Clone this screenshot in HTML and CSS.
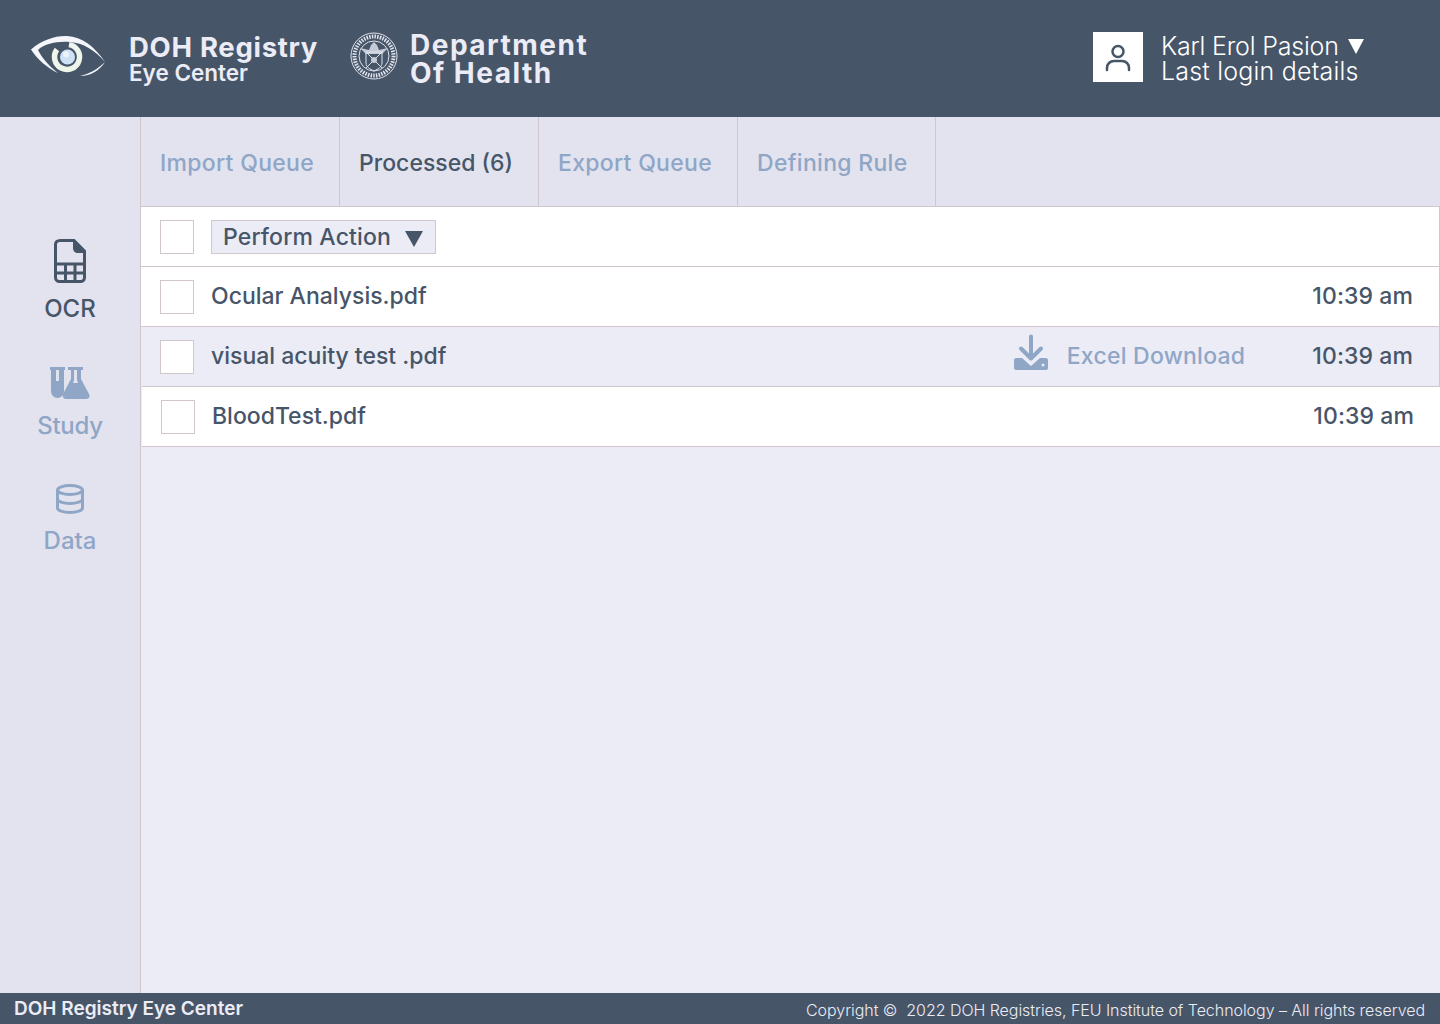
FILE: index.html
```html
<!DOCTYPE html>
<html lang="en">

<head>
    <meta charset="UTF-8">
    <meta name="viewport" content="width=device-width, initial-scale=1.0">
    <title>DOH Registry Eye Center</title>
    <link rel="stylesheet" href="styles.css">
</head>

<body>
    <header class="topbar">
        <div class="brand">
            <svg class="eye-logo" viewBox="0 0 76 42" width="76" height="42">
                <path class="eye-lid" d="M1 14.500C12 5 25 .5 37 1c15 .5 28 11 38 26C65 15 53 8 40 7 26 6 14 9 8 15c4 8 12 17 20 23C17 33 7 24 1 14.500z" />
                <path class="eye-lid" d="M50 41c9-2 18-7 25-14-5 8-14 14-25 14z" />
                <path class="eye-ring" d="M39 9.600A12.500 12.500 0 1 1 27 14.500" />
                <circle class="eye-pupil" cx="37.500" cy="22" r="7.500" />
                <circle class="eye-dot" cx="36" cy="19.500" r="3" />
            </svg>
            <div class="brand-text">
                <div class="brand-name">DOH Registry</div>
                <div class="brand-sub">Eye Center</div>
            </div>
            <svg class="seal" viewBox="0 0 48 48" width="48" height="48">
                <circle class="seal-line" cx="24" cy="24" r="23" />
                <circle class="seal-dash" cx="24" cy="24" r="19.500" />
                <circle class="seal-line" cx="24" cy="24" r="15" />
                <path class="seal-fill" d="M10 16l9 2 2-5 3-3 3 3 2 5 9-2-6 6H16z" />
                <path class="seal-line" d="M16 20h16v11c0 4-4 6-8 8-4-2-8-4-8-8z" />
                <path class="seal-line" d="M16 20l16 16M32 20L16 36" />
                <circle class="seal-fill" cx="24" cy="28" r="3" />
            </svg>
            <div class="dept-name">Department<br>Of Health</div>
        </div>
        <div class="user">
            <div class="avatar">
                <svg viewBox="0 0 50 50" width="50" height="50">
                    <circle class="avatar-line" cx="25" cy="19.500" r="5.500" />
                    <path class="avatar-line" d="M14 38v-2c0-4 3-7 7-7h8c4 0 7 3 7 7v2" />
                </svg>
            </div>
            <div class="user-text">
                <div class="user-name">Karl Erol Pasion <span class="caret caret-light"></span></div>
                <div class="user-login">Last login details</div>
            </div>
        </div>
    </header>

    <div class="layout">
        <nav class="sidebar">
            <a class="nav-item active">
                <svg viewBox="0 0 32 44" width="32" height="44">
                    <path class="nav-line" d="M5 1.500h15L30.500 12v26.500a4 4 0 0 1-4 4H5.500a4 4 0 0 1-4-4V5.500a4 4 0 0 1 4-4z" />
                    <path class="nav-solid" d="M19 1l12 11.500v1.500h-7c-3 0-5-2-5-5z" />
                    <path class="nav-line" d="M1.500 25h29M1.500 34h29M11.500 25v17.500M21 25v17.500" />
                </svg>
                <span>OCR</span>
            </a>
            <a class="nav-item nav-study">
                <svg viewBox="0 0 40 34" width="40" height="34">
                    <path class="study-fill" d="M0 1h15v3h-1v21c0 4-3 7-6.500 7S1 29 1 25V4H0zM6 4v11h3V4z" />
                    <path class="study-fill" fill-rule="evenodd" d="M18 1h15v3h-2v9l8 15c1.500 3-.500 5-3 5H16c-2.500 0-4-2-3-5l8-15V4h-3zM24 4v10l-1 3h5l-1-3V4z" />
                </svg>
                <span>Study</span>
            </a>
            <a class="nav-item nav-data">
                <svg viewBox="0 0 28 30" width="28" height="30">
                    <ellipse class="data-line" cx="14" cy="6" rx="12.500" ry="4.500" />
                    <path class="data-line" d="M1.500 6v18c0 2.500 5.500 4.500 12.500 4.500s12.500-2 12.500-4.500V6M1.500 15c0 2.500 5.500 4.500 12.500 4.500s12.500-2 12.500-4.500" />
                </svg>
                <span>Data</span>
            </a>
        </nav>

        <main class="content">
            <div class="tabs">
                <div class="tab">Import Queue</div>
                <div class="tab active">Processed (6)</div>
                <div class="tab">Export Queue</div>
                <div class="tab tab-last">Defining Rule</div>
            </div>

            <div class="row">
                <span class="check"></span>
                <div class="action-select">Perform Action <span class="caret caret-dark"></span></div>
            </div>
            <div class="row">
                <span class="check"></span>
                <span class="file">Ocular Analysis.pdf</span>
                <span class="time">10:39 am</span>
            </div>
            <div class="row row-hover">
                <span class="check"></span>
                <span class="file">visual acuity test .pdf</span>
                <span class="download">
                    <svg viewBox="0 0 34 36" width="34" height="36">
                        <path class="dl-line" d="M17 2.500V24M7 14.500L17 24.500 27 14.500" />
                        <path class="dl-fill" fill-rule="evenodd" d="M2 24h6l9 8 9-8h6c1 0 2 1 2 2v8c0 1-1 2-2 2H2c-1 0-2-1-2-2v-8c0-1 1-2 2-2zm27 5.500a1.500 1.500 0 1 0 0 3 1.500 1.500 0 0 0 0-3z" />
                    </svg>
                    Excel Download
                </span>
                <span class="time">10:39 am</span>
            </div>
            <div class="row row-shift">
                <span class="check"></span>
                <span class="file">BloodTest.pdf</span>
                <span class="time">10:39 am</span>
            </div>
        </main>
    </div>

    <footer class="footer">
        <div class="footer-name">DOH Registry Eye Center</div>
        <div class="footer-copy">Copyright &copy; &nbsp;2022 DOH Registries, FEU Institute of Technology &ndash; All rights reserved</div>
    </footer>
</body>

</html>
```

FILE: styles.css
```css
/* Page */

html,
body {
    height: 100%;
}

body {
    margin: 0;
    display: flex;
    flex-direction: column;
    height: 1024px;
    overflow: hidden;
    font-family: "Inter", "Liberation Sans", sans-serif;
    color: #475569;
    background: #ebecf5;
}

/* Top bar */

.topbar {
    flex: 0 0 117px;
    display: flex;
    align-items: center;
    justify-content: space-between;
    background: #475569;
    color: #ebecf5;
}

.brand {
    display: flex;
    align-items: center;
    padding-left: 30px;
}

.eye-logo {
    margin: 0 23px 5px 0;
}

.eye-lid {
    fill: #f4f6fb;
}

.eye-ring {
    fill: none;
    stroke: #eef5ea;
    stroke-width: 5.500;
}

.eye-pupil {
    fill: #cfe2f5;
}

.eye-dot {
    fill: #ffffff;
    opacity: 0.6;
}

.brand-text {
    width: 221px;
}

.brand-name {
    font-size: 27.500px;
    line-height: 30px;
    font-weight: 700;
    letter-spacing: 0.700px;
    margin-top: 1px;
}

.brand-sub {
    font-size: 22.500px;
    line-height: 26px;
    font-weight: 600;
    margin-top: -2px;
}

.seal {
    margin: 0 12px 5px 0;
}

.seal-line {
    fill: none;
    stroke: #dfe3ec;
    stroke-width: 1;
}

.seal-dash {
    fill: none;
    stroke: #dfe3ec;
    stroke-width: 4;
    stroke-dasharray: 1.500 1.200;
}

.seal-fill {
    fill: #c4cad6;
}

.dept-name {
    font-size: 28px;
    line-height: 28px;
    font-weight: 700;
    letter-spacing: 1.500px;
}

.user {
    display: flex;
    align-items: center;
    width: 347px;
}

.avatar {
    width: 50px;
    height: 50px;
    background: #ffffff;
    margin: 0 18px 4px 0;
}

.avatar-line {
    fill: none;
    stroke: #475569;
    stroke-width: 2.500;
    stroke-linecap: round;
}

.user-text {
    font-size: 25px;
    line-height: 26px;
    font-weight: 300;
    color: #ffffff;
}

.user-name {
    display: flex;
    align-items: center;
    gap: 9px;
    letter-spacing: -0.200px;
}

.user-login {
    letter-spacing: 0.200px;
    margin-top: -1px;
}

.caret {
    display: inline-block;
    width: 0;
    height: 0;
}

.caret-light {
    border-left: 8px solid transparent;
    border-right: 8px solid transparent;
    border-top: 15px solid #ffffff;
}

.caret-dark {
    border-left: 9.500px solid transparent;
    border-right: 9.500px solid transparent;
    border-top: 16px solid #475569;
    margin-top: 4px;
}

/* Layout */

.layout {
    flex: 1;
    display: flex;
    min-height: 0;
}

/* Sidebar */

.sidebar {
    flex: 0 0 141px;
    display: flex;
    flex-direction: column;
    align-items: center;
    gap: 43px;
    padding-top: 122px;
    box-sizing: border-box;
    background: #e2e3ee;
    border-right: 1px solid #d0c6cb;
}

.nav-item {
    display: flex;
    flex-direction: column;
    align-items: center;
    gap: 12px;
    font-size: 24px;
    line-height: 28px;
    font-weight: 500;
    color: #8fa6c7;
}

.nav-item.active {
    color: #475569;
}

.nav-study {
    letter-spacing: -0.300px;
}

.nav-data {
    gap: 13px;
    margin-top: 1px;
}

.nav-line {
    fill: none;
    stroke: #475569;
    stroke-width: 3;
}

.nav-solid {
    fill: #475569;
}

.study-fill {
    fill: #8fa6c7;
}

.data-line {
    fill: none;
    stroke: #8fa6c7;
    stroke-width: 3;
}

/* Tabs */

.content {
    flex: 1;
    min-width: 0;
    overflow: hidden;
}

.tabs {
    display: flex;
    height: 89px;
    background: #e2e3ee;
}

.tab {
    width: 199px;
    box-sizing: border-box;
    padding: 3px 0 0 19px;
    display: flex;
    align-items: center;
    font-size: 23px;
    font-weight: 500;
    letter-spacing: 0.300px;
    color: #8fa6c7;
    border-right: 1px solid #d0c6cb;
}

.tab.active {
    color: #475569;
    letter-spacing: 0;
}

.tab-last {
    width: 198px;
}

/* File rows */

.row {
    display: flex;
    align-items: center;
    height: 60px;
    box-sizing: border-box;
    padding: 0 26px 0 19px;
    font-size: 23px;
    font-weight: 500;
    background: #ffffff;
    border-top: 1px solid #d0c6cb;
    border-right: 1px solid #d0c6cb;
}

.row-hover {
    background: #ebecf5;
}

.row-shift {
    margin: 0 -1px 0 1px;
    border-bottom: 1px solid #d0c6cb;
    height: 61px;
}

.check {
    width: 34px;
    height: 34px;
    box-sizing: border-box;
    background: #ffffff;
    border: 1px solid #d0c6cb;
    margin-right: 17px;
}

.action-select {
    width: 225px;
    height: 34px;
    box-sizing: border-box;
    padding: 0 12px 0 11px;
    display: flex;
    align-items: center;
    justify-content: space-between;
    letter-spacing: 0.150px;
    background: #ebecf5;
    border: 1px solid #d0c6cb;
}

.file {
    padding-bottom: 2px;
}

.time {
    margin-left: auto;
    padding-bottom: 2px;
    letter-spacing: 0.100px;
}

.download {
    display: flex;
    align-items: center;
    gap: 19px;
    margin-left: auto;
    margin-right: 67px;
    padding-bottom: 2px;
    letter-spacing: 0.250px;
    color: #8fa6c7;
}

.download svg {
    margin-bottom: 8px;
}

.download+.time {
    margin-left: 0;
}

.dl-line {
    fill: none;
    stroke: #8fa6c7;
    stroke-width: 4;
    stroke-linecap: round;
    stroke-linejoin: round;
}

.dl-fill {
    fill: #8fa6c7;
}

/* Footer */

.footer {
    flex: 0 0 31px;
    display: flex;
    align-items: center;
    justify-content: space-between;
    padding: 0 15px 0 14px;
    background: #475569;
    color: #ebecf5;
}

.footer-name {
    font-size: 19px;
    font-weight: 600;
}

.footer-copy {
    font-size: 16px;
    font-weight: 300;
    letter-spacing: -0.050px;
    margin-top: 2px;
}
```
